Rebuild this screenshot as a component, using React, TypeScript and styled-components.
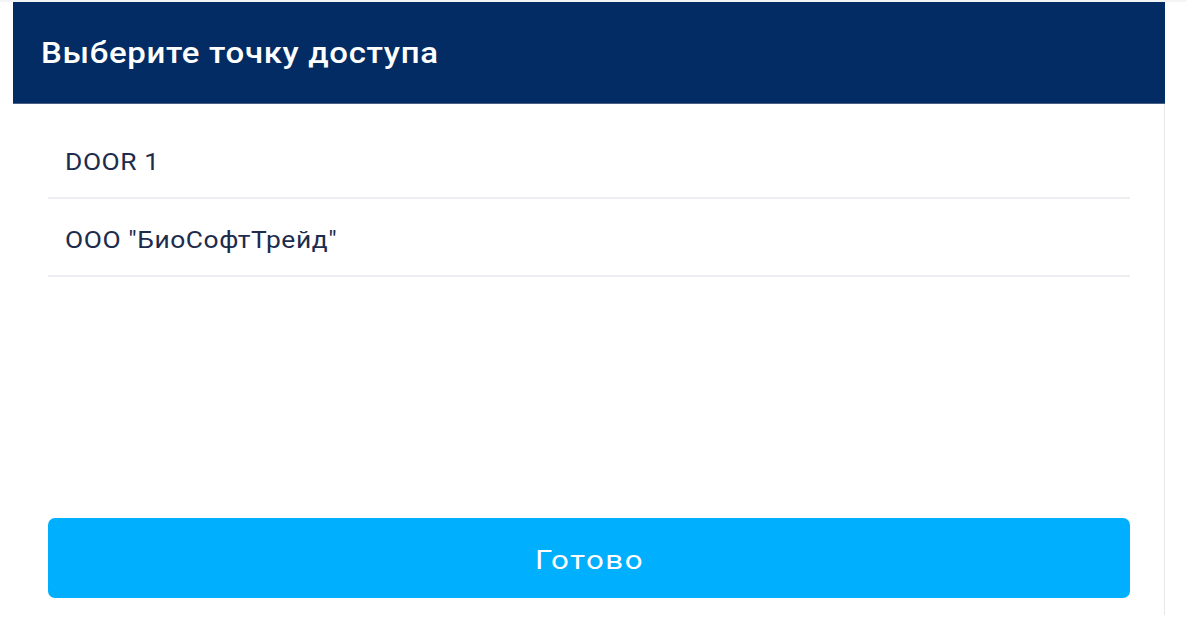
import React from "react";
import styled, { createGlobalStyle } from "styled-components";

const GlobalStyle = createGlobalStyle`
  html, body {
    margin: 0;
    padding: 0;
    background: #ffffff;
  }
  body {
    font-family: Roboto, "Noto Sans", "Liberation Sans", sans-serif;
  }
`;

const Page = styled.div`
  width: 1186px;
  height: 626px;
  box-sizing: border-box;
  border-top: 2px solid #f3f4f6;
  padding-left: 13px;
  display: flex;
  flex-direction: column;
`;

const Panel = styled.div`
  width: 1152px;
  height: 613px;
  display: flex;
  flex-direction: column;
`;

const Header = styled.div`
  height: 102px;
  flex: none;
  background: #022c63;
  display: flex;
  align-items: center;
  padding-left: 28px;
  box-sizing: border-box;
  border-bottom: 1px solid #4a6185;
`;

const Title = styled.h1`
  margin: 0;
  font-family: Roboto, "Liberation Sans", sans-serif;
  font-weight: 500;
  font-size: 30px;
  color: #ffffff;
  letter-spacing: 0.6px;
  transform: scaleX(1.1);
  transform-origin: left center;
  white-space: nowrap;
`;

const Body = styled.div`
  flex: 1;
  display: flex;
  flex-direction: column;
  border-right: 1px solid #e8e8ea;
  padding: 17px 34px 17px 35px;
`;

const List = styled.div`
  flex: 1;
  display: flex;
  flex-direction: column;
`;

const Row = styled.div`
  height: 78px;
  padding-top: 5px;
  box-sizing: border-box;
  display: flex;
  align-items: center;
  padding-left: 17px;
  border-bottom: 2px solid #eceef2;
`;

const RowLabel = styled.span`
  font-size: 24px;
  font-weight: 400;
  color: #1d2c4d;
  letter-spacing: 0.5px;
  transform: scaleX(1.1);
  transform-origin: left center;
  white-space: nowrap;
`;

const DoneButton = styled.button`
  height: 80px;
  width: 100%;
  border: none;
  border-radius: 7px;
  background: #00affe;
  color: #ffffff;
  cursor: pointer;
  padding: 4px 0 0 1px;
  display: flex;
  align-items: center;
  justify-content: center;
`;

const DoneLabel = styled.span`
  font-family: Roboto, "Liberation Sans", sans-serif;
  font-size: 26px;
  font-weight: 400;
  letter-spacing: 1.3px;
  transform: scaleX(1.2);
  transform-origin: center;
  white-space: nowrap;
`;

const items = ["DOOR 1", 'ООО "БиоСофтТрейд"'];

export default function App() {
  return (
    <>
      <GlobalStyle />
      <Page>
        <Panel>
          <Header>
            <Title>Выберите точку доступа</Title>
          </Header>
          <Body>
            <List>
              {items.map((t) => (
                <Row key={t}>
                  <RowLabel>{t}</RowLabel>
                </Row>
              ))}
            </List>
            <DoneButton>
              <DoneLabel>Готово</DoneLabel>
            </DoneButton>
          </Body>
        </Panel>
      </Page>
    </>
  );
}
